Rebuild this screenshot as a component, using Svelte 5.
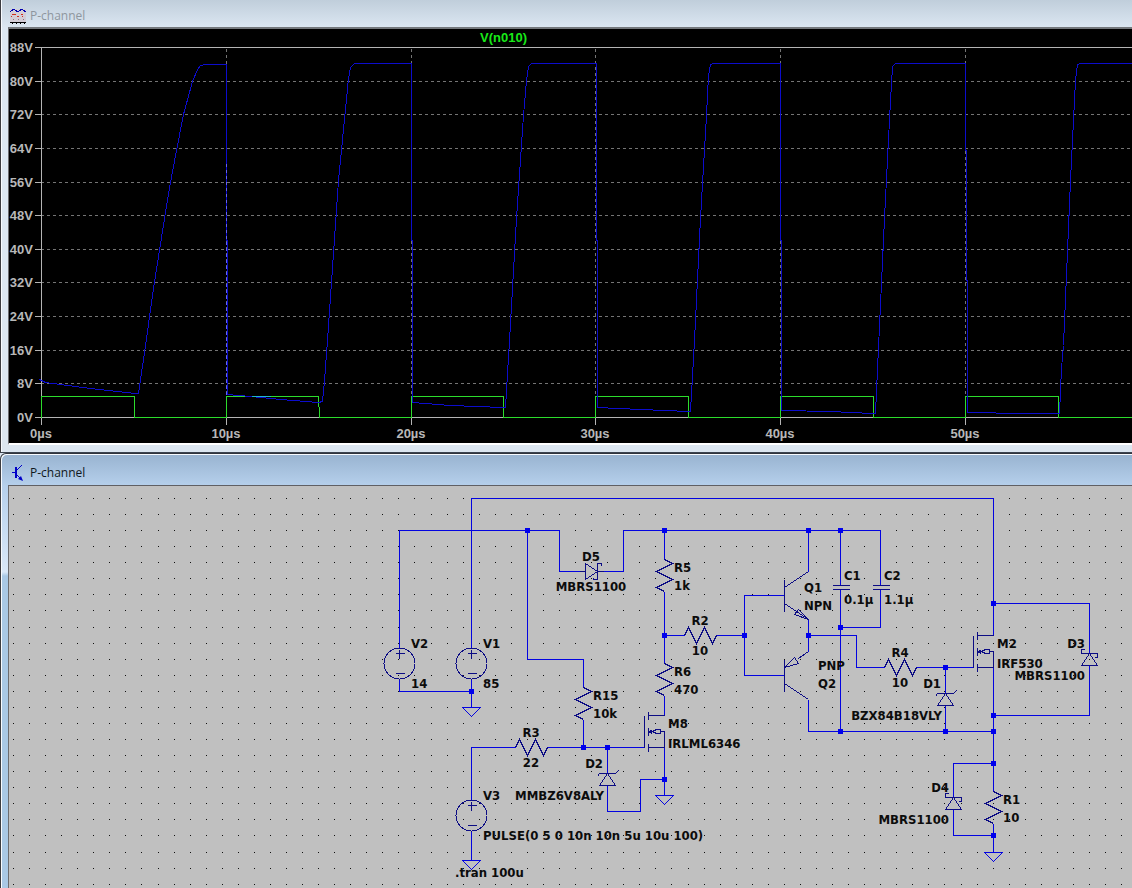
<script>
  let chartWidth = 1123;
  let sheetWidth = 1123;
  let sheetHeight = 402;

  // waveform window, page pixels
  const plotLeft = 41;
  const plotTop = 47;
  const plotBottom = 417;

  const volts = [88, 80, 72, 64, 56, 48, 40, 32, 24, 16, 8, 0].map((v) => ({
    label: `${v}V`,
    y: Math.round(plotBottom - (v / 88) * (plotBottom - plotTop)),
  }));

  const times = [0, 10, 20, 30, 40, 50].map((t) => ({
    label: `${t}µs`,
    x: Math.round(plotLeft + t * 18.48),
  }));

  const gate =
    "M41 417V396H134V417H226V396H318L319 417H411V396H503V417H595V396H688V417H780V396H873V417H965V396H1058V417H3000";

  const drain =
    "M39 379L45 382L60 384L90 388L135 393H138L145 345L153 288L164 218L170 182L176 150L183 114L192 81L197 69L200 65L206 64H226" +
    "V240H227V394L250 396L280 399L318 402L322 401L324 380L327 340L338 180L348 78L350 67L354 63H411" +
    "V240H412V402L450 405L502 407H505L509 340L516 218L523 115L526 80L528 66L531 63H596" +
    "V240H597V407L640 409L688 411H690L694 340L700 218L706 115L708 75L710 64L713 63H780" +
    "V240H781V410L830 411L872 413H875L878 347L884 218L890 100L892 66L895 63H965" +
    "V150H966V280H967V412H990L1000 413H1059L1061 368L1063 345L1070 180L1075 80L1077 64L1080 63H3000";

  // schematic
  const wires =
    "M471 647V498H993V635M399 647V530H559V571H579M603 571H623V530H880V585" +
    "M527 530V659H583V687M583 719V747M664 530V559M664 591V663M664 695V715" +
    "M664 635H684M716 635H744M784 595H744V675H784M808 530V571M808 619V651M808 699V731H993" +
    "M808 635H856V667H884M916 667H973M840 530V585M840 589V731M840 627H880V589" +
    "M945 667V693M945 705V731M993 603H1089V653M1089 665V715H993M993 667V791M993 823V852" +
    "M993 763H953V797M953 809V835H993M399 679V691H471M471 679V707" +
    "M471 799V747H515M547 747H644M471 831V860M607 747V773M607 785V811H640V779H664M664 747V795";

  const nodes = [
    [527, 530], [664, 530], [808, 530], [840, 530], [664, 635], [744, 635], [808, 635],
    [840, 627], [840, 731], [945, 667], [945, 731], [993, 603], [993, 715], [993, 731],
    [993, 763], [993, 835], [471, 691], [583, 747], [607, 747], [664, 779],
  ];

  const shapes = {
    resistor: "M0 0L8 4L-8 12L8 20L-8 28L0 32",
    resistorFlat: "M0 0L4 -8L12 8L20 -8L28 8L32 0",
    source: "M-4 -10H5M0 -14V-5M-4 10H5",
    ground: "M-9 0H9L0 9Z",
    capacitor: "M-8 0H9M-8 4H9",
    schottky: "M0 0L-8 12H8ZM-5 -4H-8V0H8V4H5",
    schottkyFlat: "M0 0L-12 -8V8ZM4 -6V-8H0V8H-4V6M-18 0H-12M0 0H6",
    zener: "M0 0L-8 12H8ZM-10 3L-8 0H8L11 -3",
    mosfet: "M-20 0V32M-16 -4V4M-16 12V20M-16 28V36M-16 0H0M-16 32H0V16H-4M-16 16L-12 15M-16 16L-12 18M-12 16L-8 14H-4V18H-8Z",
    npn: "M0 -16V16M0 -8L24 -24M0 8L24 24L14 14L10 19L24 24",
    pnp: "M0 -16V16M0 8L24 24M24 -24L14 -17M14 -12L10 -18L0 -8Z",
  };

  const parts = [
    ["source", 399, 663], ["source", 471, 663], ["source", 471, 815],
    ["ground", 471, 707], ["ground", 471, 860], ["ground", 664, 795], ["ground", 993, 852],
    ["resistor", 583, 687], ["resistor", 664, 559], ["resistor", 664, 663], ["resistor", 993, 791],
    ["resistorFlat", 515, 747], ["resistorFlat", 684, 635], ["resistorFlat", 884, 667],
    ["capacitor", 840, 585], ["capacitor", 880, 585],
    ["schottkyFlat", 597, 571], ["schottky", 1089, 653], ["schottky", 953, 797],
    ["zener", 945, 693], ["zener", 607, 773],
    ["mosfet", 993, 635], ["mosfet", 664, 715],
    ["npn", 784, 595], ["pnp", 784, 675],
  ];

  const labels = [
    ["D5", 591, 561, "middle"], ["MBRS1100", 591, 591, "middle"],
    ["V2", 411, 648], ["14", 411, 688], ["V1", 483, 648], ["85", 483, 688],
    ["R15", 593, 700], ["10k", 593, 718],
    ["R3", 531, 737, "middle"], ["22", 531, 767, "middle"],
    ["D2", 603, 768, "end"], ["MMBZ6V8ALY", 604, 800, "end"],
    ["M8", 668, 728], ["IRLML6346", 668, 748],
    ["V3", 483, 800], ["PULSE(0 5 0 10n 10n 5u 10u 100)", 483, 840],
    [".tran 100u", 455, 877],
    ["R5", 674, 572], ["1k", 674, 590], ["R6", 674, 676], ["470", 674, 694],
    ["R2", 700, 625, "middle"], ["10", 700, 655, "middle"],
    ["Q1", 804, 592], ["NPN", 804, 610], ["PNP", 818, 670], ["Q2", 818, 688],
    ["C1", 844, 580], ["0.1µ", 844, 604], ["C2", 884, 580], ["1.1µ", 884, 604],
    ["R4", 900, 657, "middle"], ["10", 900, 687, "middle"],
    ["D1", 941, 688, "end"], ["BZX84B18VLY", 942, 720, "end"],
    ["M2", 997, 648], ["IRF530", 997, 668],
    ["D3", 1085, 648, "end"], ["MBRS1100", 1085, 680, "end"],
    ["D4", 949, 792, "end"], ["MBRS1100", 949, 824, "end"],
    ["R1", 1003, 804], ["10", 1003, 822],
  ];

  $: dots = makeDots(sheetWidth, sheetHeight);

  function makeDots(width, height) {
    let d = "";
    for (let j = 0; j * 16 < height; j++) {
      for (let i = 0; i * 16 < width; i++) {
        d += `M${13 + Math.round(i * 16.06)} ${498 + Math.round(j * 16.07)}h1`;
      }
    }
    return d;
  }
</script>

<main>
  <section class="window inactive">
    <header>
      <svg class="icon" width="16" height="16" viewBox="0 0 16 16" shape-rendering="crispEdges">
        <rect y="1" width="16" height="13" fill="#d3cdd6" />
        <path d="M0 4L4 1L8 4L12 1L16 4" fill="none" stroke="#0000b0" />
        <path d="M2 6.500h4M11 6.500h2M1 8.500h1M7 8.500h2M12 8.500h1" stroke="#d03020" />
        <path d="M3 11.500h1M8 11.500h1M13 11.500h1" stroke="#907080" />
        <path d="M0 14.500H16M2 15.500h1M6 15.500h1M10 15.500h1M14 15.500h1" stroke="#000" />
      </svg>
      <h2>P-channel</h2>
    </header>
    <div class="pane chart" bind:clientWidth={chartWidth}>
      <svg class="canvas" role="img" aria-label="V(n010)">
        <g transform="translate(-9 -29)">
          <g class="grid">
            {#each volts.slice(1, -1) as tick}
              <line x1={plotLeft} x2={chartWidth + 9} y1={tick.y + 0.5} y2={tick.y + 0.5} />
            {/each}
            {#each times.slice(1) as tick}
              <line x1={tick.x + 0.5} x2={tick.x + 0.5} y1={plotTop + 2} y2={plotBottom} />
            {/each}
          </g>
          <g class="axis" transform="translate(0.5 0.5)">
            <path d="M41 47H3000M41 417H3000M41 47V424" />
            {#each volts as tick}
              <path d="M34 {tick.y}H41" />
            {/each}
            {#each times as tick}
              <path d="M{tick.x} 417V424" />
            {/each}
          </g>
          <g transform="translate(0.5 0.5)">
            <path class="trace gate" d={gate} />
            <path class="trace drain" d={drain} />
            <path class="overlap" d="M226 163V394" />
            <path class="mix" d="M251 396H270" />
          </g>
          {#each volts as tick}
            <text class="tick" x="33" y={tick.y + 5} text-anchor="end">{tick.label}</text>
          {/each}
          {#each times as tick}
            <text class="tick" x={tick.x} y="438" text-anchor="middle">{tick.label}</text>
          {/each}
          <text class="tick name" x="480" y="42">V(n010)</text>
        </g>
      </svg>
    </div>
  </section>

  <section class="window active">
    <header>
      <svg class="icon" width="16" height="16" viewBox="0 0 16 16">
        <path d="M6 2V13" stroke="#0000c8" stroke-width="2" />
        <path d="M2 7.500H6M6 6L12 0M6 9L12 15" fill="none" stroke="#0000c8" />
        <path d="M13 16L8 14L11 11Z" fill="#0000c8" />
      </svg>
      <h2>P-channel</h2>
    </header>
    <div class="pane sheet" bind:clientWidth={sheetWidth} bind:clientHeight={sheetHeight}>
      <svg class="canvas" role="img" aria-label="P-channel">
        <g transform="translate(-9 -486)">
          <path class="dots" d={dots} transform="translate(0 0.5)" />
          <g transform="translate(0.5 0.5)">
            <path class="wire" d={wires} />
            {#each parts as [kind, x, y]}
              <g transform="translate({x} {y})">
                {#if kind == "source"}
                  <circle class="part" r="15.5" />
                {/if}
                <path class={kind == "ground" ? "wire" : "part"} d={shapes[kind]} />
              </g>
            {/each}
          </g>
          {#each nodes as [x, y]}
            <rect class="node" x={x - 2} y={y - 2} width="5" height="5" />
          {/each}
          {#each labels as [text, x, y, anchor]}
            <text class="label" {x} {y} text-anchor={anchor ?? "start"}>{text}</text>
          {/each}
        </g>
      </svg>
    </div>
  </section>
</main>

<style>
  :global(body) {
    margin: 0;
    background: #dce6f0;
  }
  main {
    display: flex;
    flex-direction: column;
    min-height: 100vh;
  }
  .window {
    display: flex;
    flex-direction: column;
    box-sizing: border-box;
    border-left: 1px solid #3c3c40;
    box-shadow: inset 1px 0 #f8fbff;
    padding-left: 7px;
  }
  .inactive {
    background: linear-gradient(#c0cedb, #dce7f2 28px, #dce6f0);
    padding-bottom: 7px;
    border-bottom: 1px solid #3c4450;
  }
  .active {
    flex: 1;
    border-top: 1px solid #30343c;
    border-top-left-radius: 6px;
    background: linear-gradient(#98b3d0, #b6d0ec 32px, #dae8f8 118px, #a9c8e5 122px);
    box-shadow: inset 1px 1px #f8fbff;
  }
  header {
    display: flex;
    align-items: center;
    gap: 4px;
    padding-left: 2px;
    height: 27px;
    padding-top: 4px;
    box-sizing: border-box;
  }
  .active header {
    height: 31px;
    padding-top: 6px;
  }
  h2 {
    margin: 0;
    font: 12px/16px "Open Sans", "Noto Sans", sans-serif;
    color: #101820;
  }
  .inactive h2 {
    color: #8e969e;
  }
  .icon {
    flex: none;
  }
  .pane {
    border-left: 1px solid #6c6c70;
    overflow: hidden;
  }
  .chart {
    height: 414px;
    border-top: 2px solid #74787c;
    border-bottom: 2px solid #fff;
    background: #000;
  }
  .sheet {
    flex: 1;
    min-height: 402px;
    border-top: 1px solid #606064;
    background: #c0c0c0;
    display: flex;
  }
  .canvas {
    display: block;
    width: 100%;
    height: 100%;
    min-height: inherit;
  }
  .grid line {
    stroke: #747474;
    stroke-dasharray: 3 3;
    shape-rendering: crispEdges;
  }
  .axis path,
  .trace,
  .overlap,
  .mix {
    fill: none;
    stroke: #b4b4b4;
    shape-rendering: crispEdges;
  }
  .trace.gate {
    stroke: #2cdc2c;
  }
  .trace.drain {
    stroke: #0c0ccc;
  }
  .overlap {
    stroke: #6464f0;
    stroke-dasharray: 3 3;
  }
  .mix {
    stroke: #20b8c8;
  }
  .tick {
    font: bold 13px "Liberation Sans", Arial, sans-serif;
    fill: #b8b8b8;
  }
  .tick.name {
    fill: #18e818;
  }
  .dots {
    stroke: #101010;
    shape-rendering: crispEdges;
  }
  .wire {
    fill: none;
    stroke: #0404e0;
    shape-rendering: crispEdges;
  }
  .part {
    fill: none;
    stroke: #0c0c84;
    shape-rendering: crispEdges;
  }
  .node {
    fill: #0000ec;
  }
  .label {
    font: bold 13px "DejaVu Sans Condensed", Tahoma, "DejaVu Sans", sans-serif;
    fill: #0c0c0c;
  }
</style>
